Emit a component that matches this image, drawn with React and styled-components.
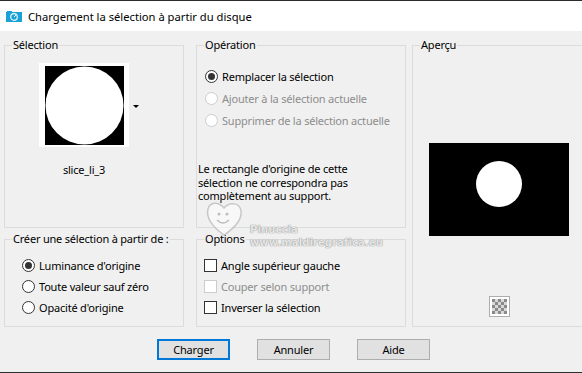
import React from 'react';
import styled, { createGlobalStyle } from 'styled-components';

const Global = createGlobalStyle`
  html, body { margin: 0; padding: 0; background: #f0f0f0; }
  body { font-family: "Noto Sans", "Liberation Sans", sans-serif; font-size: 11px; letter-spacing: -0.2px; color: #000; }
`;

const Window = styled.div`
  position: relative;
  width: 582px;
  height: 373px;
  background: #f0f0f0;
  border-top: 1px solid #2c2c2c;
  border-bottom: 1px solid #2a302b;
  box-sizing: border-box;
  overflow: hidden;
`;

const TitleBar = styled.div`
  height: 30px;
  background: #fff;
  display: flex;
  align-items: center;
  padding-left: 6px;
  gap: 6px;
  font-size: 11.2px;
  letter-spacing: 0;
`;

const Body = styled.div`
  display: grid;
  grid-template-columns: 180px 210px 168px;
  grid-template-rows: 191px 96px;
  column-gap: 12px;
  row-gap: 3px;
  padding: 6px 0 0 4px;
`;

const Group = styled.fieldset`
  margin: 0;
  padding: 0;
  min-width: 0;
  border: 1px solid #dcdcdc;
  box-sizing: border-box;
  display: flex;
  flex-direction: column;
  grid-column: ${p => p.$col};
  grid-row: ${p => p.$row};
  margin-left: ${p => p.$shift || 0}px;
`;

const Legend = styled.legend`
  margin-left: 7px;
  padding: 0 1px;
  line-height: 16px;
`;

const ThumbWrap = styled.div`
  display: flex;
  flex-direction: column;
  align-items: center;
  width: 90px;
  margin: 10px 0 0 34px;
`;

const ThumbRow = styled.div`
  position: relative;
  width: 90px;
`;

const Thumb = styled.div`
  width: 79px;
  height: 79px;
  background: #fff;
  padding: 3px 5px 2px 6px;
`;

const Arrow = styled.div`
  position: absolute;
  left: 94px;
  top: 42px;
  width: 0;
  height: 0;
  border-left: 3px solid transparent;
  border-right: 3px solid transparent;
  border-top: 3px solid #000;
`;

const ThumbName = styled.div`
  margin-top: 15px;
  line-height: 16px;
`;

const OptList = styled.div`
  display: flex;
  flex-direction: column;
  padding-left: ${p => p.$pad}px;
  margin-top: ${p => p.$top}px;
`;

const Row = styled.label`
  display: flex;
  align-items: center;
  height: ${p => p.$h}px;
  gap: 4px;
  color: ${p => p.$disabled ? '#8d8d8d' : '#000'};
  white-space: nowrap;
`;

const Radio = styled.span`
  width: 13px;
  height: 13px;
  border-radius: 50%;
  box-sizing: border-box;
  border: 1px solid ${p => p.$disabled ? '#cccccc' : '#333'};
  background: #fff;
  display: flex;
  align-items: center;
  justify-content: center;
  flex: none;
  &::after {
    content: '';
    display: ${p => p.$on ? 'block' : 'none'};
    width: 7px;
    height: 7px;
    border-radius: 50%;
    background: #333;
  }
`;

const Check = styled.span`
  width: 13px;
  height: 13px;
  box-sizing: border-box;
  border: 1px solid ${p => p.$disabled ? '#cccccc' : '#333'};
  background: #fff;
  flex: none;
`;

const Note = styled.p`
  margin: 31px 0 0 1px;
  line-height: 13.5px;
  width: 180px;
`;

const Preview = styled.div`
  align-self: center;
  margin-top: 90px;
  width: 140px;
  height: 93px;
  background: #000;
`;

const CheckerBtn = styled.div`
  align-self: center;
  margin-top: auto;
  margin-bottom: 9px;
  width: 21px;
  height: 21px;
  box-sizing: border-box;
  border: 1px solid #adadad;
  background: #fff;
  display: flex;
  align-items: center;
  justify-content: center;
`;

const Buttons = styled.div`
  display: flex;
  justify-content: center;
  gap: 27px;
  margin-top: 12px;
  padding-left: 5px;
`;

const Button = styled.button`
  width: 73px;
  height: 21px;
  box-sizing: border-box;
  background: #e1e1e1;
  border: ${p => p.$default ? '2px solid #0078d7' : '1px solid #adadad'};
  font-family: inherit;
  font-size: 11px;
  letter-spacing: -0.2px;
  color: #000;
  padding: 0;
`;

const Watermark = styled.div`
  position: absolute;
  left: 204px;
  top: 198px;
  display: flex;
  align-items: flex-end;
  gap: 6px;
  pointer-events: none;
  color: rgba(245, 245, 245, 0.9);
  text-shadow: 0 0 1px rgba(120,120,120,0.9), 0 0 1px rgba(120,120,120,0.6);
  font-weight: bold;
  font-family: "DejaVu Sans", sans-serif;
`;

const WmText = styled.div`
  display: flex;
  flex-direction: column;
  font-size: 10px;
  line-height: 13px;
  letter-spacing: 0.1px;
  margin-bottom: -12px;
`;

export default function App() {
  return (
    <Window>
      <Global />
      <TitleBar>
        <svg width="16" height="11" viewBox="0 0 16 11">
          <rect x="0" y="1" width="16" height="10" fill="#1ba1d6" />
          <rect x="1" y="0" width="5" height="2" fill="#1ba1d6" />
          <circle cx="8" cy="6" r="3.3" fill="none" stroke="#e8f7fc" strokeWidth="1.2" />
          <path d="M8 6 L10 4" stroke="#e8f7fc" strokeWidth="1" />
        </svg>
        <span>Chargement la sélection à partir du disque</span>
      </TitleBar>
      <Body>
        <Group $col="1" $row="1">
          <Legend>Sélection</Legend>
          <ThumbWrap>
            <ThumbRow>
              <Thumb>
                <svg width="79" height="79" viewBox="0 0 79 79">
                  <rect width="79" height="79" fill="#000" />
                  <circle cx="39.5" cy="39.5" r="39" fill="#fff" />
                </svg>
              </Thumb>
              <Arrow />
            </ThumbRow>
            <ThumbName>slice_li_3</ThumbName>
          </ThumbWrap>
        </Group>
        <Group $col="2" $row="1">
          <Legend>Opération</Legend>
          <OptList $pad={8} $top={12}>
            <Row $h={22}><Radio $on />Remplacer la sélection</Row>
            <Row $h={22} $disabled><Radio $disabled />Ajouter à la sélection actuelle</Row>
            <Row $h={22} $disabled><Radio $disabled />Supprimer de la sélection actuelle</Row>
          </OptList>
          <Note>Le rectangle d'origine de cette sélection ne correspondra pas complètement au support.</Note>
        </Group>
        <Group $col="3" $row="1 / span 2" $shift={-6}>
          <Legend>Aperçu</Legend>
          <Preview>
            <svg width="140" height="93" viewBox="0 0 140 93">
              <circle cx="70" cy="41" r="23" fill="#fff" />
            </svg>
          </Preview>
          <CheckerBtn>
            <svg width="15" height="15" viewBox="0 0 15 15">
              {[0, 1, 2, 3, 4].map(r => [0, 1, 2, 3, 4].map(c => (
                <rect key={r + '-' + c} x={c * 3} y={r * 3} width="3" height="3" fill={(r + c) % 2 === 0 ? '#8a8a8a' : '#d8d8d8'} />
              )))}
            </svg>
          </CheckerBtn>
        </Group>
        <Group $col="1" $row="2">
          <Legend>Créer une sélection à partir de :</Legend>
          <OptList $pad={17} $top={8}>
            <Row $h={21}><Radio $on />Luminance d'origine</Row>
            <Row $h={21}><Radio />Toute valeur sauf zéro</Row>
            <Row $h={21}><Radio />Opacité d'origine</Row>
          </OptList>
        </Group>
        <Group $col="2" $row="2">
          <Legend>Options</Legend>
          <OptList $pad={7} $top={8}>
            <Row $h={21}><Check />Angle supérieur gauche</Row>
            <Row $h={21} $disabled><Check $disabled />Couper selon support</Row>
            <Row $h={21}><Check />Inverser la sélection</Row>
          </OptList>
        </Group>
      </Body>
      <Buttons>
        <Button $default>Charger</Button>
        <Button>Annuler</Button>
        <Button>Aide</Button>
      </Buttons>
      <Watermark>
        <svg width="40" height="38" viewBox="0 0 40 38">
          <path d="M20 36 C6 26 2 18 4 10 C6 3 14 2 20 9 C26 2 36 4 37 12 C38 20 32 28 20 36 Z" fill="rgba(255,255,255,0.5)" stroke="rgba(170,170,170,0.6)" strokeWidth="1.5" />
          <circle cx="15" cy="15" r="1.5" fill="rgba(150,150,150,0.6)" />
          <circle cx="23" cy="15" r="1.5" fill="rgba(150,150,150,0.6)" />
          <path d="M13 21 Q19 27 25 21" fill="none" stroke="rgba(150,150,150,0.6)" strokeWidth="1.5" />
        </svg>
        <WmText>
          <span>Pinuccia</span>
          <span>www.maldiregrafica.eu</span>
        </WmText>
      </Watermark>
    </Window>
  );
}
